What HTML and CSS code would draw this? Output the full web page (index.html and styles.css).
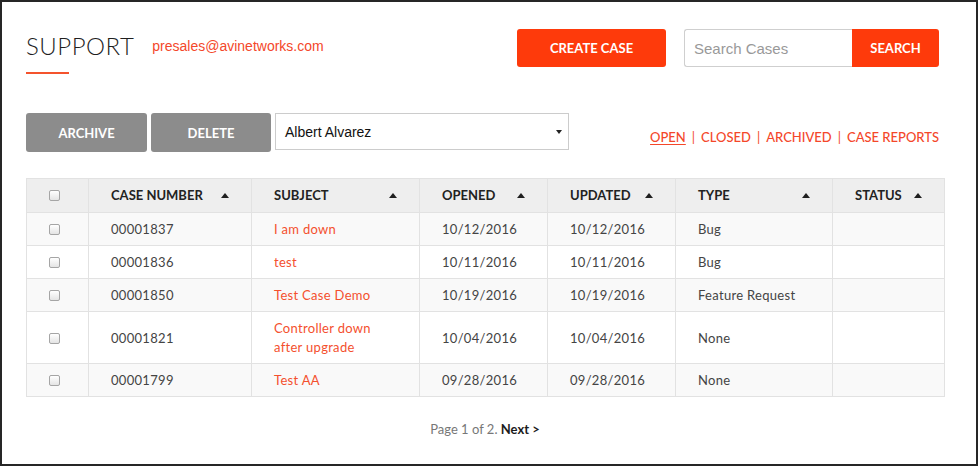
FILE: index.html
```html
<!DOCTYPE html>
<html lang="en">
<head>
<meta charset="utf-8">
<title>Support</title>
<link rel="stylesheet" href="styles.css">
</head>
<body>
<div class="frame">
  <header class="header">
    <div class="brand">
      <div class="title-wrap">
        <h1 class="title">SUPPORT</h1>
        <div class="rule"></div>
      </div>
      <a class="email" href="#">presales@avinetworks.com</a>
    </div>
    <div class="header-actions">
      <button class="btn btn-primary btn-create">CREATE CASE</button>
      <div class="search">
        <input class="search-input" type="text" placeholder="Search Cases">
        <button class="btn btn-primary btn-search">SEARCH</button>
      </div>
    </div>
  </header>

  <div class="toolbar">
    <div class="actions">
      <button class="btn btn-gray btn-archive">ARCHIVE</button>
      <button class="btn btn-gray btn-delete">DELETE</button>
      <div class="select"><span>Albert Alvarez</span><span class="caret"></span></div>
    </div>
    <nav class="filters">
      <a href="#" class="active">OPEN</a><span class="sep">|</span><a href="#">CLOSED</a><span class="sep">|</span><a href="#">ARCHIVED</a><span class="sep">|</span><a href="#">CASE REPORTS</a>
    </nav>
  </div>

  <table class="cases">
    <colgroup>
      <col class="c-check"><col class="c-num"><col class="c-subj"><col class="c-open"><col class="c-upd"><col class="c-type"><col class="c-status">
    </colgroup>
    <thead>
      <tr>
        <th><span class="cb"></span></th>
        <th><div class="th-in">CASE NUMBER<span class="sort"></span></div></th>
        <th><div class="th-in">SUBJECT<span class="sort"></span></div></th>
        <th><div class="th-in">OPENED<span class="sort"></span></div></th>
        <th><div class="th-in">UPDATED<span class="sort"></span></div></th>
        <th><div class="th-in">TYPE<span class="sort"></span></div></th>
        <th><div class="th-in">STATUS<span class="sort"></span></div></th>
      </tr>
    </thead>
    <tbody>
      <tr>
        <td><span class="cb"></span></td><td>00001837</td><td><a href="#">I am down</a></td><td>10/12/2016</td><td>10/12/2016</td><td>Bug</td><td></td>
      </tr>
      <tr>
        <td><span class="cb"></span></td><td>00001836</td><td><a href="#">test</a></td><td>10/11/2016</td><td>10/11/2016</td><td>Bug</td><td></td>
      </tr>
      <tr>
        <td><span class="cb"></span></td><td>00001850</td><td><a href="#">Test Case Demo</a></td><td>10/19/2016</td><td>10/19/2016</td><td>Feature Request</td><td></td>
      </tr>
      <tr>
        <td><span class="cb"></span></td><td>00001821</td><td><a href="#">Controller down after upgrade</a></td><td>10/04/2016</td><td>10/04/2016</td><td>None</td><td></td>
      </tr>
      <tr>
        <td><span class="cb"></span></td><td>00001799</td><td><a href="#">Test AA</a></td><td>09/28/2016</td><td>09/28/2016</td><td>None</td><td></td>
      </tr>
    </tbody>
  </table>

  <div class="pager">Page 1 of 2. <a href="#">Next &gt;</a></div>
</div>
</body>
</html>
```

FILE: styles.css
```css
html, body {
  margin: 0;
  padding: 0;
  background: #fff;
}

.frame {
  box-sizing: border-box;
  width: 978px;
  height: 466px;
  border: 2px solid #262626;
  padding: 27px 32px 0 24px;
  font-family: Lato, "Open Sans", sans-serif;
  color: #444;
}

.header {
  display: flex;
  justify-content: space-between;
  align-items: flex-start;
  padding-right: 5px;
}

.brand {
  display: flex;
  align-items: flex-start;
  gap: 18px;
}

.title {
  margin: 2px 0 0;
  font-family: Lato, sans-serif;
  font-weight: 300;
  font-size: 24px;
  line-height: 29px;
  color: #1f1f1f;
  letter-spacing: 0.5px;
}

.rule {
  width: 43px;
  height: 2px;
  margin-top: 12px;
  background: #f4532d;
}

.email {
  margin-top: 9px;
  font-family: "Liberation Sans", Arial, sans-serif;
  font-size: 14px;
  line-height: 16px;
  color: #f4472a;
  text-decoration: none;
}

.header-actions {
  display: flex;
  gap: 18px;
}

.btn {
  box-sizing: border-box;
  border: 0;
  margin: 0;
  padding: 0;
  font-family: Lato, sans-serif;
  font-weight: 700;
  font-size: 13px;
  color: #fff;
  border-radius: 3px;
  cursor: pointer;
}

.btn-primary {
  background: #fe3a0b;
  height: 38px;
}

.btn-create {
  width: 149px;
}

.search {
  display: flex;
}

.search-input {
  box-sizing: border-box;
  width: 168px;
  height: 38px;
  margin: 0;
  padding: 0 9px;
  border: 1px solid #cfcfcf;
  border-right: 0;
  border-radius: 3px 0 0 3px;
  font-family: "Liberation Sans", Arial, sans-serif;
  font-size: 15px;
  color: #333;
  outline: none;
}

.search-input::placeholder {
  color: #999;
}

.btn-search {
  width: 87px;
  border-radius: 0 3px 3px 0;
}

.toolbar {
  display: flex;
  align-items: flex-start;
  margin-top: 39px;
}

.actions {
  display: flex;
  gap: 4px;
}

.btn-gray {
  background: #8c8c8c;
  height: 39px;
}

.btn-archive {
  width: 121px;
}

.btn-delete {
  width: 120px;
}

.select {
  box-sizing: border-box;
  width: 294px;
  height: 37px;
  border: 1px solid #ccc;
  display: flex;
  align-items: center;
  justify-content: space-between;
  padding: 0 6px 0 9px;
  font-family: "Liberation Sans", Arial, sans-serif;
  font-size: 14px;
  color: #111;
}

.caret {
  width: 0;
  height: 0;
  border-left: 3px solid transparent;
  border-right: 3px solid transparent;
  border-top: 4px solid #222;
}

.filters {
  margin-left: auto;
  margin-top: 16px;
  padding-right: 5px;
  font-family: Lato, sans-serif;
  font-weight: 500;
  font-size: 13px;
  line-height: 16px;
  color: #f4472a;
  white-space: nowrap;
}

.filters a {
  color: #f4472a;
  text-decoration: none;
}

.filters a.active {
  text-decoration: underline;
  text-underline-offset: 2px;
}

.sep {
  margin: 0 6px;
  font-weight: 400;
}

.cases {
  margin-top: 26px;
  width: 918px;
  table-layout: fixed;
  border-collapse: collapse;
  border: 1px solid #e2e2e2;
  font-size: 13px;
  line-height: 19px;
}

.c-check { width: 62px; }
.c-num { width: 163px; }
.c-subj { width: 168px; }
.c-open { width: 128px; }
.c-upd { width: 128px; }
.c-type { width: 157px; }
.c-status { width: 112px; }

.cases th,
.cases td {
  border: 1px solid #e2e2e2;
  padding: 7px 22px 6px 22px;
  text-align: left;
  vertical-align: middle;
}

.cases th {
  background: #eeeeee;
  color: #222;
  font-weight: 700;
  padding-top: 7px;
  padding-bottom: 7px;
}

.th-in {
  display: flex;
  align-items: center;
  justify-content: space-between;
}

.sort {
  width: 0;
  height: 0;
  border-left: 4px solid transparent;
  border-right: 4px solid transparent;
  border-bottom: 5px solid #1f1f1f;
}

.cases tbody tr:nth-child(odd) td {
  background: #f9f9f9;
}

.cases td {
  color: #444;
  letter-spacing: 0.3px;
}

.cases td a {
  color: #f4502e;
  text-decoration: none;
}

.cb {
  display: inline-block;
  box-sizing: border-box;
  width: 11px;
  height: 11px;
  border: 1px solid #a5a5a5;
  border-radius: 2px;
  background: linear-gradient(#ffffff, #e4e4e4);
  vertical-align: middle;
  position: relative;
  top: -1px;
}

.pager {
  margin-top: 24px;
  width: 918px;
  text-align: center;
  font-size: 13px;
  line-height: 16px;
  color: #777;
}

.pager a {
  color: #1c1c1c;
  font-weight: 700;
  text-decoration: none;
}
```
